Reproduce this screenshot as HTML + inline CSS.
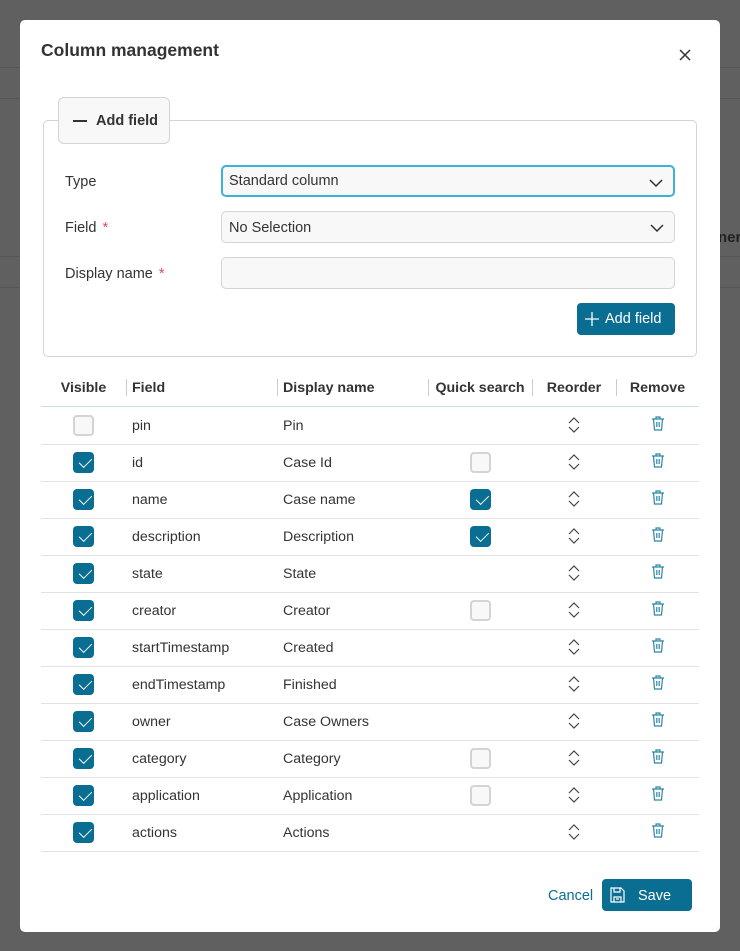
<!DOCTYPE html>
<html><head><style>
*{box-sizing:border-box}
body{margin:0;width:740px;height:951px;background:#606060;font-family:"Liberation Sans",sans-serif;position:relative;overflow:hidden;color:#333}
.bgl{position:absolute;left:0;right:0;height:1px;background:#555}
.modal{position:absolute;left:20px;top:20px;width:700px;height:912px;background:#fff;border-radius:5px}
.title{position:absolute;left:21px;top:20px;font-size:17.5px;font-weight:bold;color:#333}
.close{position:absolute;left:659px;top:29px}
.fs{position:absolute;left:23px;top:100px;width:654px;height:237px;border:1px solid #d4d4d4;border-radius:5px}
.legend{position:absolute;left:38px;top:77px;width:112px;height:47px;border:1px solid #d4d4d4;border-radius:6px;background:#f8f8f8;font-weight:bold;font-size:14.5px;line-height:47px;padding-left:37px}
.legend:before{content:"";position:absolute;left:14px;top:22px;width:14px;height:2px;background:#333}
.lbl{position:absolute;left:45px;font-size:14.5px}
.lbl span{color:#e0457b;margin-left:6px}
.inp{position:absolute;left:201px;width:454px;height:32px;border:1px solid #d4d4d4;border-radius:5px;background:#f8f8f8;font-size:14.5px;line-height:32px;padding-left:7px}
.inp svg{position:absolute;right:10px;top:12px}
.addbtn{position:absolute;left:557px;top:283px;width:98px;height:32px;background:#0a6e92;border-radius:4px;color:#fff;font-size:14.5px;line-height:33px;padding-left:28px}
table{position:absolute;left:21px;top:349px;width:658px;border-collapse:collapse;font-size:14.2px}
th{font-weight:bold;height:37px;text-align:left;border-bottom:1px solid #c7dde6;position:relative;padding:2px 6px 0;white-space:nowrap}
th.c{text-align:center;padding:2px 2px 0}
th .sep{position:absolute;left:0;top:10px;height:17px;width:1px;background:#ccc}
td{height:37px;border-bottom:1px solid #e3e3e3;padding:1px 6px 0}
td.c{text-align:center;padding:0 6px}
.cb{display:inline-block;width:21px;height:21px;border-radius:4px;vertical-align:middle}
.cb.on{background:#0a6e92;position:relative}
.cb.on:after{content:"";position:absolute;left:5px;top:3px;width:11px;height:6px;border-left:1.5px solid #fff;border-bottom:1.5px solid #fff;transform:rotate(-45deg) translate(-1px,3px)}
.cb.off{border:2px solid #d4d4d4;background:#f8f8f8}
.cancel{position:absolute;left:528px;top:868px;color:#0a6e92;font-size:14.5px}
.save{position:absolute;left:582px;top:859px;width:90px;height:32px;background:#0a6e92;border-radius:4px;color:#fff;font-size:14.5px;line-height:34px;padding-left:36px}
</style></head><body>
<div class="bgl" style="top:67px"></div><div class="bgl" style="top:98px"></div><div class="bgl" style="top:256px"></div><div class="bgl" style="top:287px"></div>
<div style="position:absolute;left:718px;top:229px;color:#222;font-weight:bold;font-size:15px">ner</div>
<div class="modal">
<div class="title">Column management</div>
<svg class="close" width="12" height="12" viewBox="0 0 12 12"><path d="M1 1L11 11M11 1L1 11" stroke="#333" stroke-width="1.5"/></svg>
<div class="fs"></div>
<div class="legend">Add field</div>
<div class="lbl" style="top:154px">Type</div>
<div class="inp" style="top:145px;border:2px solid #3fb0d8;line-height:29px;padding-left:6px">Standard column<svg width="14" height="8" viewBox="0 0 14 8"><path d="M1 1L7 7L13 1" stroke="#333" stroke-width="1.5" fill="none"/></svg></div>
<div class="lbl" style="top:200px">Field<span>*</span></div>
<div class="inp" style="top:191px">No Selection<svg width="14" height="8" viewBox="0 0 14 8"><path d="M1 1L7 7L13 1" stroke="#333" stroke-width="1.5" fill="none"/></svg></div>
<div class="lbl" style="top:246px">Display name<span>*</span></div>
<div class="inp" style="top:237px"></div>
<div class="addbtn"><svg style="position:absolute;left:8px;top:9px" width="14" height="14"><path d="M7 0V14M0 7H14" stroke="#fff" stroke-width="1.3"/></svg>Add field</div>
<table>
<tr><th class="c" style="width:85px">Visible</th><th style="width:151px"><span class="sep"></span>Field</th><th style="width:151px"><span class="sep"></span>Display name</th><th class="c" style="width:104px"><span class="sep"></span>Quick search</th><th class="c" style="width:84px"><span class="sep"></span>Reorder</th><th class="c"><span class="sep"></span>Remove</th></tr>
</table>
<table id="t" style="top:387px"></table>
<div class="cancel">Cancel</div>
<div class="save"><svg style="position:absolute;left:8px;top:8px" width="15" height="16" viewBox="0 0 15 16"><path d="M1 1H11L14 4V15H1Z M4 1V5H10V1 M4 15V10H11V15 M6 12H9" stroke="#fff" stroke-width="1.2" fill="none"/></svg>Save</div>
</div>
<script>
var rows=[["pin","Pin",0,""],["id","Case Id",1,"off"],["name","Case name",1,"on"],["description","Description",1,"on"],["state","State",1,""],["creator","Creator",1,"off"],["startTimestamp","Created",1,""],["endTimestamp","Finished",1,""],["owner","Case Owners",1,""],["category","Category",1,"off"],["application","Application",1,"off"],["actions","Actions",1,""]];
var h="";
var re='<svg width="12" height="16" viewBox="0 0 12 16" style="vertical-align:middle;margin-top:-2px"><path d="M1 6L6 1L11 6M1 10L6 15L11 10" stroke="#444" stroke-width="1.2" fill="none"/></svg>';
var tr='<svg width="14" height="15" viewBox="0 0 14 15" style="vertical-align:middle;margin-top:-4px"><path d="M1 3H13M5 3V1H9V3M2.5 3L3.5 14H10.5L11.5 3M5.8 6V11M8.2 6V11" stroke="#2b86a8" stroke-width="1.2" fill="none"/></svg>';
rows.forEach(function(r){h+='<tr><td class="c" style="width:85px"><span class="cb '+(r[2]?"on":"off")+'"></span></td><td style="width:151px">'+r[0]+'</td><td style="width:151px">'+r[1]+'</td><td class="c" style="width:104px">'+(r[3]?'<span class="cb '+r[3]+'"></span>':'')+'</td><td class="c" style="width:84px">'+re+'</td><td class="c">'+tr+'</td></tr>'});
document.getElementById("t").innerHTML=h;
</script>
</body></html>
